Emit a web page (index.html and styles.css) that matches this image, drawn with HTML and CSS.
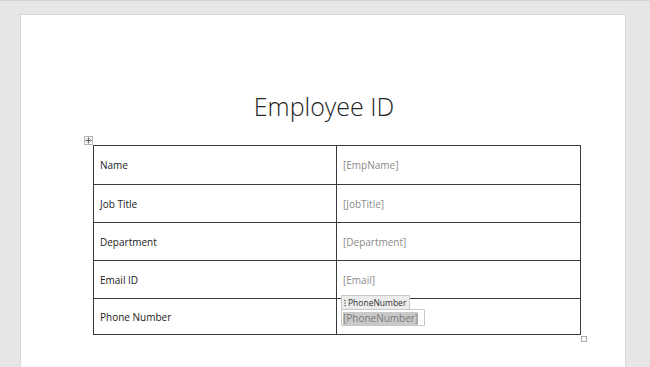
FILE: index.html
```html
<!DOCTYPE html>
<html lang="en">
<head>
    <meta charset="UTF-8">
    <title>Employee ID</title>
    <link rel="stylesheet" href="styles.css">
</head>
<body>
    <div class="page">
        <h1 class="doc-title">Employee ID</h1>

        <div class="table-wrap">
            <span class="move-handle">
                <svg width="9" height="9" viewBox="0 0 9 9">
                    <rect x="0.5" y="0.5" width="8" height="8" fill="#fff" stroke="#b5b5b5"/>
                    <path d="M4.5 1.5v6M1.5 4.5h6" stroke="#555" stroke-width="1"/>
                    <path d="M3.5 2.5h2M3.5 6.5h2M2.5 3.5v2M6.5 3.5v2" stroke="#888" stroke-width="1"/>
                </svg>
            </span>

            <table class="emp-table">
                <tr>
                    <td class="label">Name</td>
                    <td class="field">[EmpName]</td>
                </tr>
                <tr>
                    <td class="label">Job Title</td>
                    <td class="field">[JobTitle]</td>
                </tr>
                <tr>
                    <td class="label">Department</td>
                    <td class="field">[Department]</td>
                </tr>
                <tr>
                    <td class="label">Email ID</td>
                    <td class="field">[Email]</td>
                </tr>
                <tr class="last-row">
                    <td class="label">Phone Number</td>
                    <td class="field">
                        <div class="content-control">
                            <span class="cc-tag"><span class="cc-grip"></span>PhoneNumber</span>
                            <span class="cc-body"><span class="cc-text">[PhoneNumber]</span></span>
                        </div>
                    </td>
                </tr>
            </table>

            <span class="resize-handle"></span>
        </div>
    </div>
</body>
</html>
```

FILE: styles.css
```css
* {
    box-sizing: border-box;
}

body {
    margin: 0;
    height: 367px;
    overflow: hidden;
    background: #e6e6e6;
    border-top: 1px solid #d4d4d4;
    font-family: "Open Sans", "Noto Sans", sans-serif;
}

.page {
    margin: 13px 0 0 20px;
    width: 606px;
    height: 353px;
    background: #fff;
    border: 1px solid #d9d9d9;
    border-bottom: none;
    padding-top: 75px;
}

.doc-title {
    margin: 0 0 23px;
    text-align: center;
    font-weight: 300;
    font-size: 25px;
    line-height: 32px;
    color: #262626;
    padding-left: 2px;
}

.table-wrap {
    position: relative;
    margin-left: 72px;
    width: 488px;
}

.move-handle {
    position: absolute;
    left: -9px;
    top: -9px;
    width: 9px;
    height: 9px;
    display: block;
}

.move-handle svg {
    display: block;
}

.emp-table {
    width: 488px;
    border-collapse: collapse;
    table-layout: fixed;
}

.emp-table td {
    border: 1px solid #3a3a3a;
    height: 38px;
    padding: 0 6px;
    font-size: 10px;
    vertical-align: middle;
}

.emp-table tr:first-child td {
    height: 39px;
}

.emp-table .last-row td {
    height: 36px;
}

.label {
    width: 243px;
    color: #1a1a1a;
}

.field {
    color: #8a8a8a;
    font-size: 10px;
}

.content-control {
    display: flex;
    flex-direction: column;
    align-items: flex-start;
    margin-top: -12px;
    margin-left: -2px;
}

.cc-tag {
    display: flex;
    align-items: center;
    height: 14px;
    padding: 0 3px 0 2px;
    background: #ececec;
    border: 1px solid #c8c8c8;
    border-bottom: none;
    font-size: 8.5px;
    color: #333;
}

.cc-grip {
    width: 2px;
    height: 8px;
    margin-right: 2px;
    background: radial-gradient(circle, #666 0.6px, transparent 0.8px) 0 0 / 2px 2.7px repeat-y;
}

.cc-body {
    display: block;
    width: 84px;
    height: 17px;
    padding: 1px 1px;
    border: 1px solid #c8c8c8;
    background: #fff;
}

.cc-text {
    display: inline-block;
    height: 13px;
    line-height: 13px;
    background: #c9c9c9;
    color: #7a7a7a;
    font-size: 10px;
}

.resize-handle {
    position: absolute;
    right: -6px;
    bottom: -7px;
    width: 6px;
    height: 6px;
    border: 1px solid #a8a8a8;
    background: #fff;
}
```
